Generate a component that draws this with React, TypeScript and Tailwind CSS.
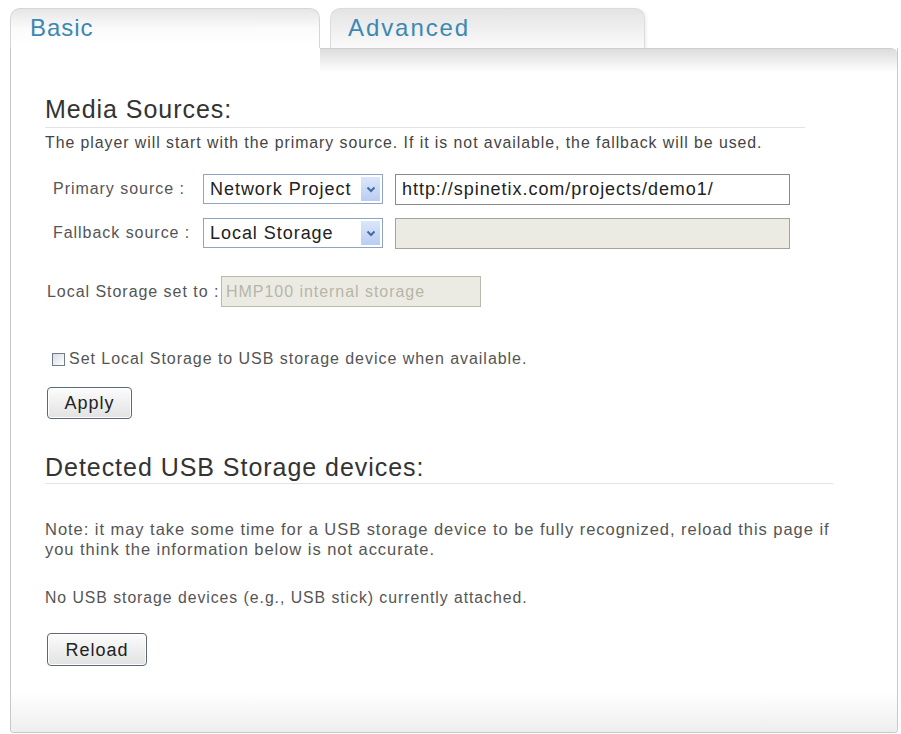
import React from "react";

function Chevron() {
  return (
    <svg width="10" height="7" viewBox="0 0 10 7">
      <path d="M1.5 1.5 L5 5 L8.5 1.5" fill="none" stroke="#4a6a9c" strokeWidth="2" />
    </svg>
  );
}

function Select({ value }: { value: string }) {
  return (
    <div className="flex h-[30px] w-[180px] items-stretch border border-[#8ea4c0] bg-white">
      <div className="flex flex-1 items-center pl-[6px] text-[18px] leading-[22px] text-[#222]">{value}</div>
      <div className="m-[2px] flex w-[19px] items-center justify-center bg-gradient-to-b from-[#dbe6fb] to-[#b9cdf3]">
        <Chevron />
      </div>
    </div>
  );
}

function Button({ label, w }: { label: string; w: string }) {
  return (
    <div
      className={`${w} flex items-center justify-center rounded-[4px] border border-[#5d6873] bg-gradient-to-b from-[#fcfcfc] to-[#e2e2e2] text-[18px] leading-[22px] text-[#222] shadow-[inset_0_0_0_1px_#ffffff]`}
    >
      {label}
    </div>
  );
}

export default function App() {
  return (
    <div className="relative h-[734px] w-[901px] overflow-hidden bg-white font-['Liberation_Sans',Arial,sans-serif] tracking-[0.06em]">
      <div className="pl-[10px] pr-[3px] pt-[8px]">
        <div className="flex h-[40px]">
          <div className="h-[40px] w-[310px] rounded-t-[10px] border-l border-r border-t border-[#d6d6d6] bg-gradient-to-b from-[#e6e6e6] via-[#fbfbfb] to-white pl-[19px] pt-[5px] text-[24px] leading-[28px] text-[#3b88b2]">
            Basic
          </div>
          <div className="ml-[10px] h-[40px] w-[315px] rounded-t-[10px] border-l border-r border-t border-[#dcdcdc] bg-gradient-to-b from-[#e4e4e4] to-[#fafafa] pl-[17px] pt-[5px] text-[24px] leading-[28px] tracking-[0.08em] text-[#3b88b2] shadow-[2px_0_2px_rgba(0,0,0,0.05)]">
            Advanced
          </div>
        </div>
        <div className="flex h-[685px] flex-col rounded-b-[4px] border-b border-l border-r border-[#c8c8c8]">
          <div className="flex">
            <div className="w-[309px]" />
            <div className="h-[24px] flex-1 rounded-tr-[6px] border-t border-[#cfcfcf] bg-gradient-to-b from-[#dcdcdc] to-white" />
          </div>
          <div className="flex flex-1 flex-col pl-[34px]">
            <div className="mt-[23px] w-[760px] border-b border-[#e2e2e2] pb-[4px] text-[25px] leading-[28px] text-[#333]">
              Media Sources:
            </div>
            <div className="mt-[6px] whitespace-nowrap text-[15.85px] leading-[18px] text-[#444]">
              The player will start with the primary source. If it is not available, the fallback will be used.
            </div>

            <div className="mt-[22px] flex h-[30px] items-center">
              <div className="w-[158px] pl-[8px] text-[16px] text-[#555]">Primary source :</div>
              <Select value="Network Project" />
              <div className="ml-[12px] flex h-[31px] w-[395px] items-center border border-[#8a8a8a] bg-white pl-[6px] text-[18px] text-[#222]">
                http://spinetix.com/projects/demo1/
              </div>
            </div>

            <div className="mt-[14px] flex h-[30px] items-center">
              <div className="w-[158px] pl-[8px] text-[16px] text-[#555]">Fallback source :</div>
              <Select value="Local Storage" />
              <div className="ml-[12px] h-[31px] w-[395px] border border-[#a4a49a] bg-[#ecebe3]" />
            </div>

            <div className="mt-[28px] flex h-[31px] items-center">
              <div className="w-[176px] whitespace-nowrap pl-[2px] text-[16px] text-[#555]">Local Storage set to :</div>
              <div className="flex h-[31px] w-[260px] items-center border border-[#b9b9ad] bg-[#ecebe3] pl-[4px] text-[16px] text-[#b6b6a8]">
                HMP100 internal storage
              </div>
            </div>

            <div className="mt-[43px] flex h-[18px] items-center">
              <div className="ml-[7px] h-[13px] w-[13px] border border-[#6e7c8a] bg-gradient-to-br from-[#d9dde2] to-white" />
              <div className="ml-[4px] whitespace-nowrap text-[16px] text-[#555]">
                Set Local Storage to USB storage device when available.
              </div>
            </div>

            <div className="mt-[19px] flex h-[32px] pl-[2px]">
              <Button label="Apply" w="w-[85px]" />
            </div>

            <div className="mt-[34px] w-[788px] border-b border-[#e2e2e2] pb-[2px] text-[25px] leading-[28px] text-[#333]">
              Detected USB Storage devices:
            </div>

            <div className="mt-[35px] whitespace-nowrap text-[16.5px] leading-[20px] text-[#555]">
              Note: it may take some time for a USB storage device to be fully recognized, reload this page if
              <br />
              you think the information below is not accurate.
            </div>

            <div className="mt-[29px] whitespace-nowrap text-[15.8px] leading-[20px] text-[#555]">
              No USB storage devices (e.g., USB stick) currently attached.
            </div>

            <div className="mt-[25px] flex h-[33px] pl-[2px]">
              <Button label="Reload" w="w-[100px]" />
            </div>
          </div>
          <div className="h-[40px] rounded-b-[4px] bg-gradient-to-b from-white to-[#eeeeee]" />
        </div>
      </div>
    </div>
  );
}
